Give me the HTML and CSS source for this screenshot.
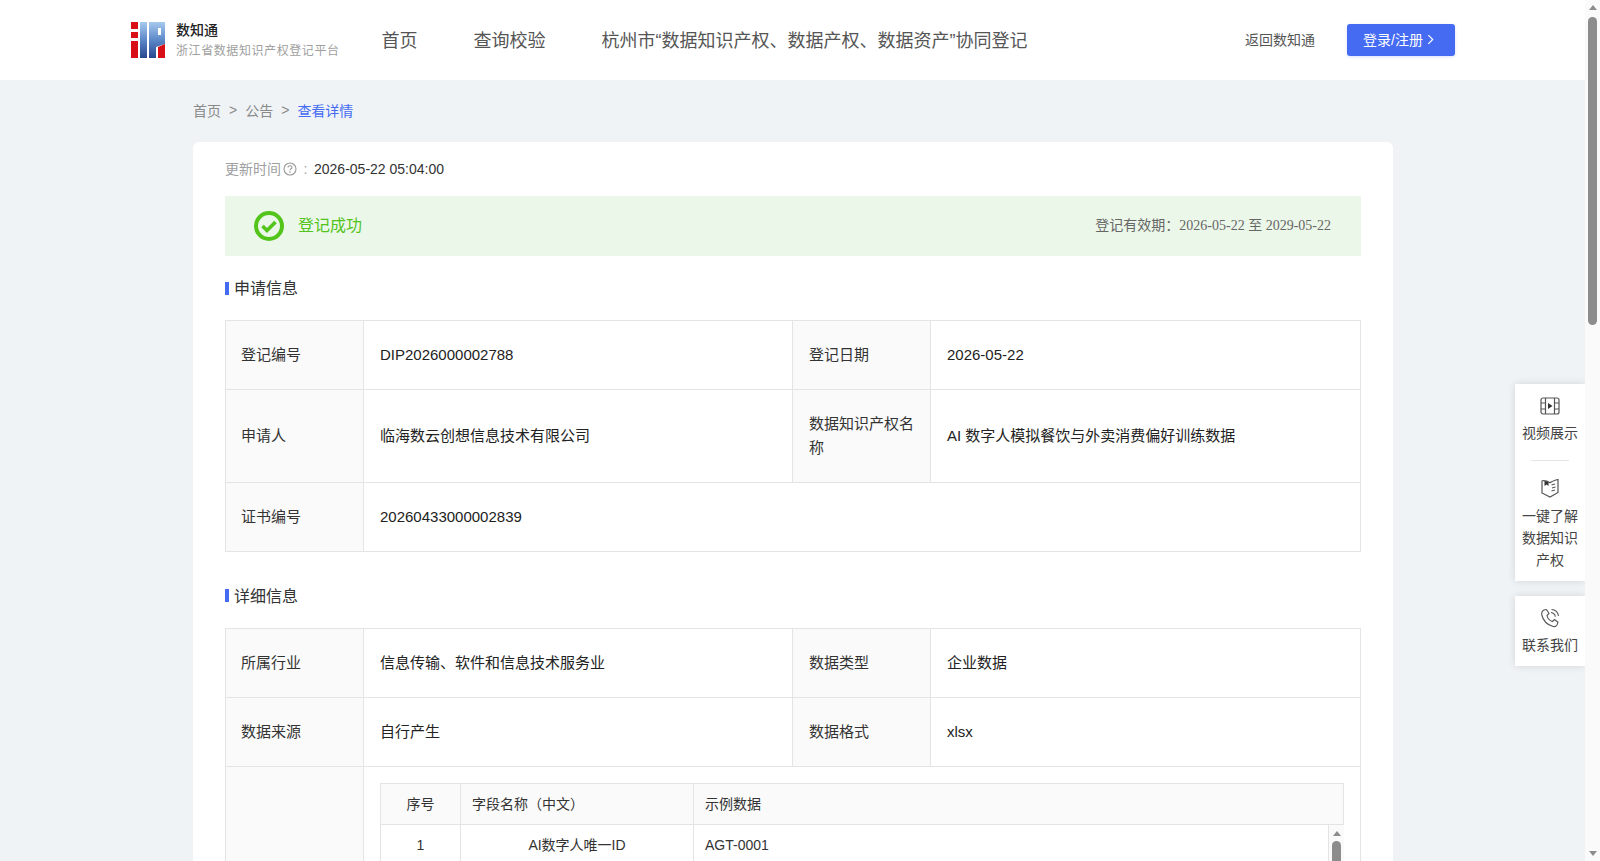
FILE: index.html
```html
<!DOCTYPE html>
<html lang="zh-CN">
<head>
<meta charset="utf-8">
<title>查看详情</title>
<link rel="stylesheet" href="styles.css">
</head>
<body>
<div class="app">
  <div class="page">
    <header class="topbar">
      <div class="brand">
        <svg class="logo" viewBox="0 0 34 36" width="34" height="36">
          <defs>
            <linearGradient id="lg" x1="0" y1="0" x2="0" y2="1">
              <stop offset="0" stop-color="#a6c9ee"/>
              <stop offset=".5" stop-color="#5c88c8"/>
              <stop offset="1" stop-color="#28478f"/>
            </linearGradient>
          </defs>
          <rect x="0" y="0" width="7" height="7" fill="#d90f18"/>
          <rect x="0" y="10" width="7" height="6" fill="#d90f18"/>
          <rect x="0" y="19" width="7" height="17" fill="#d90f18"/>
          <rect x="9" y="0" width="7" height="36" fill="url(#lg)"/>
          <path d="M18 0H34V22L25 25V36H18Z M27 6V13H30V6Z" fill="url(#lg)" fill-rule="evenodd"/>
          <path d="M27 25L34 22V36H27Z" fill="#d90f18"/>
        </svg>
        <div class="brand-text">
          <div class="brand-name">数知通</div>
          <div class="brand-sub">浙江省数据知识产权登记平台</div>
        </div>
      </div>
      <nav class="nav">
        <a class="nav-item">首页</a>
        <a class="nav-item">查询校验</a>
        <a class="nav-item">杭州市“数据知识产权、数据产权、数据资产”协同登记</a>
      </nav>
      <div class="top-actions">
        <a class="back-link">返回数知通</a>
        <button class="login-btn">登录/注册
          <svg viewBox="0 0 8 12" width="7" height="11"><path d="M1.5 1L6.5 6L1.5 11" fill="none" stroke="#fff" stroke-width="1.4"/></svg>
        </button>
      </div>
    </header>

    <main class="content">
      <div class="crumbs">
        <span>首页</span><span class="sep">&gt;</span><span>公告</span><span class="sep">&gt;</span><span class="crumb-current">查看详情</span>
      </div>
      <section class="card">
        <div class="update-row">
          <span class="update-label">更新时间</span>
          <svg class="help" viewBox="0 0 14 14" width="14" height="14"><circle cx="7" cy="7" r="6" fill="none" stroke="#999" stroke-width="1.1"/><path d="M5 5.6C5 4.4 5.9 3.7 7 3.7S9 4.4 9 5.4C9 6.7 7 6.8 7 8.2" fill="none" stroke="#999" stroke-width="1.1"/><circle cx="7" cy="10" r=".8" fill="#999"/></svg>
          <span class="update-colon">:</span>
          <span class="update-value">2026-05-22 05:04:00</span>
        </div>

        <div class="status">
          <div class="status-left">
            <svg viewBox="0 0 30 30" width="30" height="30"><circle cx="15" cy="15" r="13" fill="none" stroke="#52c41a" stroke-width="4"/><path d="M8.5 15L13 19.5L21.5 11" fill="none" stroke="#52c41a" stroke-width="3.6"/></svg>
            <span class="status-text">登记成功</span>
          </div>
          <div class="status-date">登记有效期：2026-05-22 至 2029-05-22</div>
        </div>

        <h3 class="section-title">申请信息</h3>
        <table class="info">
          <colgroup><col class="c-l"><col class="c-v"><col class="c-l"><col></colgroup>
          <tr><th>登记编号</th><td>DIP2026000002788</td><th>登记日期</th><td>2026-05-22</td></tr>
          <tr><th>申请人</th><td>临海数云创想信息技术有限公司</td><th>数据知识产权名称</th><td>AI 数字人模拟餐饮与外卖消费偏好训练数据</td></tr>
          <tr><th>证书编号</th><td colspan="3">20260433000002839</td></tr>
        </table>

        <h3 class="section-title second">详细信息</h3>
        <table class="info">
          <colgroup><col class="c-l"><col class="c-v"><col class="c-l"><col></colgroup>
          <tr><th>所属行业</th><td>信息传输、软件和信息技术服务业</td><th>数据类型</th><td>企业数据</td></tr>
          <tr><th>数据来源</th><td>自行产生</td><th>数据格式</th><td>xlsx</td></tr>
          <tr>
            <th></th>
            <td colspan="3" class="sample-cell">
              <div class="sample">
                <div class="sample-head">
                  <div class="cell c-no">序号</div>
                  <div class="cell c-name">字段名称（中文）</div>
                  <div class="cell c-ex">示例数据</div>
                </div>
                <div class="sample-body">
                  <div class="sample-rows">
                    <div class="sample-row">
                      <div class="cell c-no">1</div>
                      <div class="cell c-name center">AI数字人唯一ID</div>
                      <div class="cell c-ex">AGT-0001</div>
                    </div>
                  </div>
                  <div class="mini-scroll">
                    <span class="arrow up"></span>
                    <span class="mini-thumb"></span>
                  </div>
                </div>
              </div>
            </td>
          </tr>
        </table>
      </section>
    </main>

    <aside class="float-bar">
      <div class="float-card">
        <div class="float-item">
          <svg viewBox="0 0 20 18" width="20" height="18" class="ico"><rect x="1" y="1" width="18" height="16" rx="2" fill="none" stroke="#555" stroke-width="1.2"/><path d="M5.5 1V17M14.5 1V17M1 6H5.5M1 12H5.5M14.5 6H19M14.5 12H19" fill="none" stroke="#555" stroke-width="1.2"/><path d="M8 6L12.5 9L8 12Z" fill="#333"/></svg>
          <div>视频展示</div>
        </div>
        <div class="float-line"></div>
        <div class="float-item">
          <svg viewBox="0 0 20 20" width="20" height="20" class="ico"><path d="M3 2.5C5.5 2.5 8 3.2 10 4.8C12 3.2 14.5 2.5 18 1.5V14.5L10 19L2 15V3Z" fill="none" stroke="#555" stroke-width="1.2"/><path d="M4.5 2.8L4.5 8L6.5 6.5L8.5 8V4Z" fill="#333"/><path d="M11.5 7L15 6M12 10L15.5 9M11.5 13L15 12" fill="none" stroke="#555" stroke-width="1.1"/></svg>
          <div>一键了解数据知识产权</div>
        </div>
      </div>
      <div class="float-card contact">
        <div class="float-item">
          <svg viewBox="0 0 20 20" width="20" height="20" class="ico ico-phone"><path d="M4 2L6.5 1.5L9 5.5L7 7.5C7.5 10 9.5 12.5 12.5 13.5L14.5 11.5L18 14.2L17 17C16 18.5 14.5 19 12.5 18.3C7 16.5 3 12 1.8 7C1.4 5 2 3.2 4 2Z" fill="none" stroke="#555" stroke-width="1.1"/><path d="M11 4.5C13.5 4.8 15 6.5 15.3 8.8M11.5 1.5C15.5 1.8 18 4.5 18.5 8" fill="none" stroke="#555" stroke-width="1.1"/></svg>
          <div>联系我们</div>
        </div>
      </div>
    </aside>
  </div>
  <div class="page-scroll">
    <span class="arrow up"></span>
    <span class="page-thumb"></span>
    <span class="arrow down"></span>
  </div>
</div>
</body>
</html>
```

FILE: styles.css
```css
* { box-sizing: border-box; }
html, body { margin: 0; height: 861px; overflow: hidden; }
body {
  font-family: "Liberation Sans", "Noto Sans CJK SC", sans-serif;
  font-size: 14px;
  color: #333;
  background: #eff3f6;
}
.app { display: flex; height: 861px; overflow: hidden; }
.page { position: relative; flex: 1; min-width: 0; height: 861px; overflow: hidden; background: #eff3f6; }

/* scrollbars */
.page-scroll {
  width: 15px; height: 861px; background: #fafafa;
  display: flex; flex-direction: column; align-items: center;
  padding: 5px 0;
}
.page-thumb { width: 9px; height: 308px; margin-top: 7px; background: #8c8c8c; border-radius: 5px; }
.page-scroll .down { margin-top: auto; }
.arrow { width: 0; height: 0; border-left: 4.5px solid transparent; border-right: 4.5px solid transparent; }
.arrow.up { border-bottom: 5px solid #8c8c8c; }
.arrow.down { border-top: 5px solid #8c8c8c; }

/* header */
.topbar {
  display: flex; align-items: center; height: 80px;
  padding: 0 130px 0 131px; background: #fff;
}
.brand { display: flex; align-items: center; }
.logo { display: block; margin-right: 11px; }
.brand-name { font-size: 14px; line-height: 20px; margin-bottom: 2px; font-weight: 500; color: #222; }
.brand-sub { font-size: 12px; line-height: 19px; letter-spacing: .58px; color: #a0a0a0; }
.nav { display: flex; gap: 56px; margin-left: 42px; padding-bottom: 2px; font-size: 18px; color: #555; }
.nav-item { white-space: nowrap; }
.top-actions { display: flex; align-items: center; margin-left: auto; }
.back-link { color: #555; margin-right: 32px; padding-bottom: 2px; }
.login-btn {
  display: flex; align-items: center; gap: 4px;
  width: 108px; height: 32px; padding: 0 0 2px 16px;
  border: 0; border-radius: 3px; background: #456bf3; color: #fff;
  font: inherit; box-shadow: 0 1px 3px rgba(69, 107, 243, .2);
}

/* content */
.content { width: 1200px; margin-left: 193px; }
.crumbs { display: flex; align-items: center; height: 62px; padding-bottom: 2px; color: #8a8a8a; }
.sep { margin: 0 8px; }
.crumb-current { color: #456bf3; }
.card { background: #fff; border-radius: 6px 6px 0 0; padding: 0 32px 32px; }
.update-row { display: flex; align-items: center; height: 54px; }
.update-label { color: #a0a0a0; padding-bottom: 2px; }
.help { margin-left: 2px; }
.update-colon { color: #a0a0a0; width: 17px; text-align: center; }
.update-value { color: #333; }
.status {
  display: flex; align-items: center; justify-content: space-between;
  height: 60px; padding: 0 30px 0 29px; background: #ebf7e9;
}
.status-left { display: flex; align-items: center; gap: 14px; }
.status-text { font-size: 16px; color: #52c41a; padding-bottom: 4px; }
.status-date { font-family: "Liberation Serif", "Noto Sans CJK SC", serif; color: #666; padding-bottom: 4px; }
.section-title {
  display: flex; align-items: center; height: 64px; margin: 0; padding-bottom: 2px;
  font-size: 16px; font-weight: 400; color: #333;
}
.section-title::before { content: ""; width: 4px; height: 13px; margin: 2px 5px 0 0; background: #456bf3; }
.section-title.second { height: 65px; margin-top: 11px; }

/* tables */
.info { width: 1136px; table-layout: fixed; border-collapse: collapse; font-size: 15px; color: #222; }
.c-l { width: 138px; }
.c-v { width: 429px; }
.info th, .info td {
  border: 1px solid #e4e4e4; padding: 22px 16px; line-height: 24px;
  text-align: left; font-weight: 400; vertical-align: middle;
}
.info tr > th:first-child { padding-left: 15px; }
.info th { background: #fafafa; color: #333; }
.info td.sample-cell { padding: 16px 16px 0; vertical-align: top; }
.sample { font-size: 14px; color: #333; }
.sample-head { display: flex; height: 42px; border: 1px solid #e4e4e4; background: #fafafa; }
.sample-body { display: flex; border-left: 1px solid #e4e4e4; margin-top: 0; height: 60px; }
.sample-rows { flex: 1; min-width: 0; }
.sample-row { display: flex; height: 41px; border-bottom: 1px solid #e4e4e4; }
.cell { display: flex; align-items: center; padding: 0 11px; }
.c-no { width: 80px; justify-content: center; border-right: 1px solid #e4e4e4; }
.c-name { width: 233px; border-right: 1px solid #e4e4e4; }
.c-name.center { justify-content: center; }
.c-ex { flex: 1; padding-left: 11px; }
.mini-scroll {
  width: 16px; background: #fafafa; border-left: 1px solid #e4e4e4;
  display: flex; flex-direction: column; align-items: center; padding-top: 6px;
}
.mini-thumb { width: 9px; height: 60px; margin-top: 5px; background: #8c8c8c; border-radius: 5px 5px 0 0; }

/* floating bar */
.float-bar {
  position: absolute; right: 0; top: 384px; width: 70px;
  display: flex; flex-direction: column; gap: 15px; font-size: 14px; color: #444;
}
.float-card { background: #fff; box-shadow: 0 0 8px rgba(0, 0, 0, .12); padding: 13px 7px 10px; }
.float-card.contact { padding: 12px 7px 10px; }
.float-item { text-align: center; line-height: 22px; }
.ico { display: block; margin: 0 auto 7px; }
.ico-phone { margin-bottom: 6px; }
.float-line { height: 1px; margin: 16px 9px 17px; background: #e4e4e4; }
```
